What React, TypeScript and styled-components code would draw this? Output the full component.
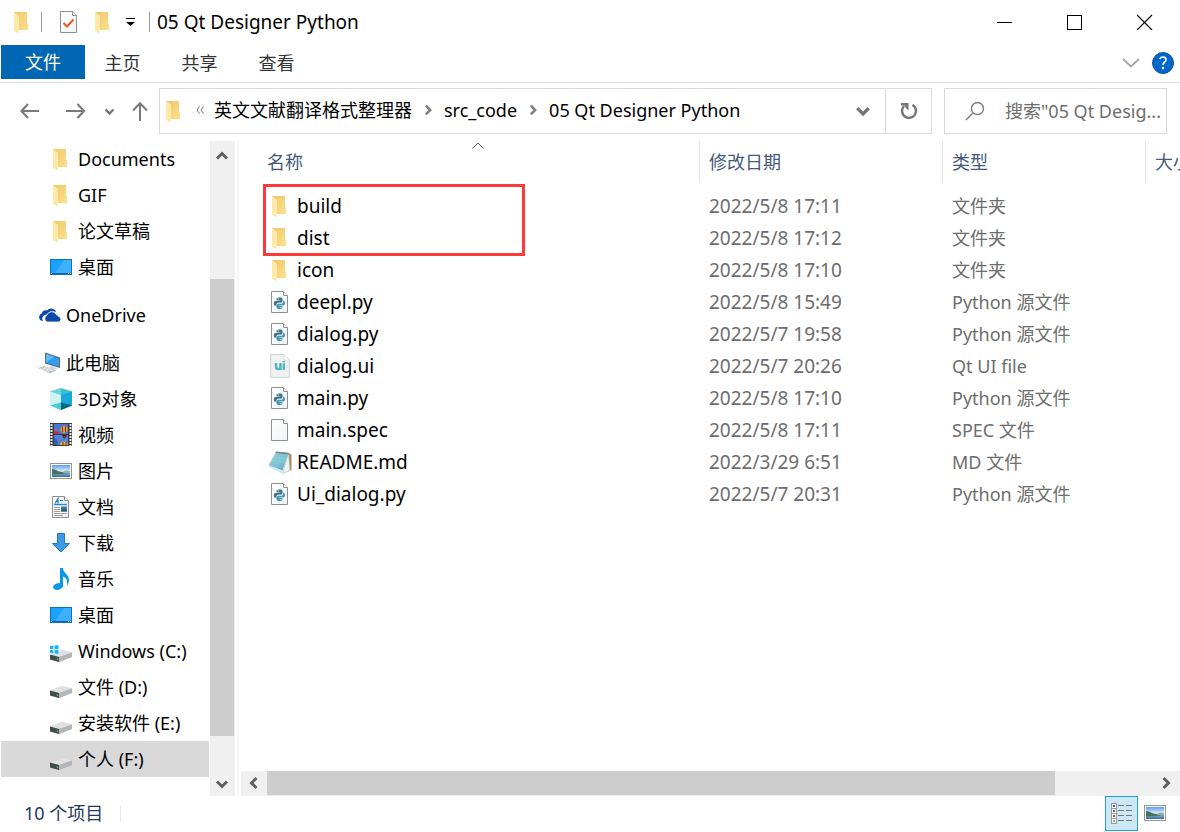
import React from "react";
import styled, { createGlobalStyle } from "styled-components";

const GlobalStyle = createGlobalStyle`
  * { box-sizing: border-box; }
  body {
    margin: 0;
    background: #fff;
    color: #000;
    font-family: "Noto Sans", "Noto Sans CJK SC", sans-serif;
    font-size: 18px;
    line-height: 24px;
  }
  button, input { font: inherit; color: inherit; }
  svg { display: block; flex: none; }
`;

/* ---------- shared ---------- */

const PlainButton = styled.button`
  display: flex;
  align-items: center;
  justify-content: center;
  flex: none;
  margin: 0;
  padding: 0;
  border: 0;
  background: none;
  white-space: nowrap;
`;

const Window = styled.div`
  display: flex;
  flex-direction: column;
  height: 100vh;
  min-height: 560px;
  overflow: hidden;
`;

/* ---------- title bar ---------- */

const TitleBar = styled.header`
  display: flex;
  align-items: center;
  flex: none;
  height: 45px;
  padding: 0 0 2px 14px;
`;

const QuickAccess = styled.div`
  display: flex;
  align-items: center;
  gap: 11px;
`;

const Divider = styled.span<{ $color?: string; $height?: number }>`
  flex: none;
  width: 1px;
  height: ${(p) => p.$height ?? 20}px;
  background: ${(p) => p.$color ?? "#999"};
`;

const QuickButton = styled(PlainButton)<{ $width?: number }>`
  width: ${(p) => p.$width ?? 16}px;
  height: 24px;
`;

const Title = styled.h1`
  flex: 1;
  min-width: 0;
  margin: 0;
  padding-left: 7px;
  overflow: hidden;
  font-size: 19px;
  font-weight: 400;
  text-overflow: ellipsis;
  white-space: nowrap;
`;

const CaptionButton = styled(PlainButton)`
  width: 70px;
  height: 43px;
`;

/* ---------- ribbon ---------- */

const Ribbon = styled.nav`
  display: flex;
  flex: none;
  height: 38px;
  padding: 0 6px 3px 1px;
  border-bottom: 1px solid #dadbdc;
`;

const RibbonTab = styled(PlainButton)<{ $primary?: boolean }>`
  width: ${(p) => (p.$primary ? 84 : 77)}px;
  height: 34px;
  padding: ${(p) => (p.$primary ? "0" : "2px 2px 0 0")};
  background: ${(p) => (p.$primary ? "#0167b5" : "transparent")};
  color: ${(p) => (p.$primary ? "#fff" : "#333")};
`;

const RibbonEnd = styled.div`
  display: flex;
  align-items: center;
  gap: 12px;
  margin-left: auto;
  padding-top: 2px;
`;

/* ---------- address row ---------- */

const AddressRow = styled.div`
  display: flex;
  align-items: center;
  flex: none;
  height: 58px;
  padding: 0 13px 2px 0;
`;

const NavButtons = styled.div`
  display: flex;
  flex: none;
  width: 159px;
  padding-left: 7px;
`;

const NavButton = styled(PlainButton)<{ $width: number }>`
  width: ${(p) => p.$width}px;
  height: 40px;
`;

const AddressBox = styled.div`
  display: flex;
  align-items: center;
  flex: 1;
  min-width: 0;
  height: 46px;
  padding-left: 6px;
  border: 1px solid #d9d9d9;
`;

const Crumbs = styled.div`
  display: flex;
  align-items: center;
  flex: 1;
  min-width: 0;
  gap: 10px;
  padding: 0 0 2px 14px;
  overflow: hidden;
`;

const RefreshButton = styled(PlainButton)`
  width: 46px;
  height: 44px;
  border-left: 1px solid #d9d9d9;
`;

const DropButton = styled(PlainButton)`
  width: 44px;
  height: 44px;
`;

const SearchBox = styled.label`
  display: flex;
  align-items: center;
  flex: none;
  width: 223px;
  height: 46px;
  margin-left: 12px;
  padding-left: 20px;
  gap: 20px;
  border: 1px solid #d9d9d9;
`;

const SearchInput = styled.input`
  flex: 1;
  min-width: 0;
  padding: 0;
  border: 0;
  outline: 0;
  background: none;
  &::placeholder { color: #6d6d6d; opacity: 1; }
`;

/* ---------- body ---------- */

const Body = styled.main`
  display: flex;
  flex: 1;
  min-height: 0;
`;

const Tree = styled.nav`
  flex: none;
  width: 210px;
  padding: 0 1px;
  overflow: hidden;
`;

const TreeGroup = styled.div`
  & + & { margin-top: 12px; }
`;

const TreeItem = styled.button<{ $root?: boolean; $selected?: boolean }>`
  display: flex;
  align-items: center;
  gap: 5px;
  width: 100%;
  height: 36px;
  margin: 0;
  padding: 0 0 0 ${(p) => (p.$root ? 36 : 48)}px;
  border: 0;
  background: ${(p) => (p.$selected ? "#d9d9d9" : "transparent")};
  text-align: left;
  white-space: nowrap;
`;

const IconSlot = styled.span`
  display: flex;
  align-items: center;
  justify-content: center;
  flex: none;
  width: 24px;
  height: 24px;
`;

const VerticalBar = styled.div`
  display: flex;
  flex-direction: column;
  flex: none;
  width: 25px;
  padding-right: 1px;
  background: #f0f0f0;
`;

const HorizontalBar = styled.div`
  display: flex;
  flex: none;
  height: 25px;
  margin-left: 2px;
  padding-bottom: 1px;
  background: #f0f0f0;
`;

const ScrollArrow = styled(PlainButton)<{ $length?: number }>`
  flex: 0 0 ${(p) => p.$length ?? 25}px;
`;

const ScrollSpace = styled.div<{ $grow: number }>`
  flex: ${(p) => p.$grow} 1 0;
`;

const ScrollThumb = styled(ScrollSpace)`
  background: #cdcdcd;
`;

const Content = styled.section`
  display: flex;
  flex-direction: column;
  flex: 1;
  min-width: 0;
  margin-left: 2px;
  border-left: 2px solid #f7f7f7;
`;

const ListArea = styled.div`
  position: relative;
  flex: 1;
  min-height: 0;
  overflow: hidden;
`;

const FileTable = styled.table`
  width: 1030px;
  border-collapse: separate;
  border-spacing: 0;
  table-layout: fixed;
`;

const HeadCell = styled.th<{ $width: number; $first?: boolean }>`
  width: ${(p) => p.$width}px;
  height: 41px;
  padding: 0 0 0 ${(p) => (p.$first ? 28 : 9)}px;
  border-right: 1px solid #e5e5e5;
  color: #44597b;
  font-weight: 400;
  text-align: left;
  white-space: nowrap;
`;

const SortMark = styled.span`
  position: absolute;
  top: 1px;
  left: 233px;
`;

const SpacerRow = styled.tr`
  height: 8px;
`;

const Cell = styled.td`
  height: 32px;
  padding: 0 0 0 9px;
  color: #6d6d6d;
  white-space: nowrap;
`;

const DateCell = styled(Cell)`
  font-size: 19px;
`;

const NameCell = styled(Cell)`
  padding-left: 29px;
  color: #000;
  font-size: 19px;
`;

const FileName = styled.div`
  display: flex;
  align-items: center;
  gap: 5px;
`;

const Highlight = styled.div`
  position: absolute;
  top: 43px;
  left: 24px;
  width: 262px;
  height: 72px;
  border: 3px solid #ff3838;
  pointer-events: none;
`;

/* ---------- status bar ---------- */

const StatusBar = styled.footer`
  display: flex;
  align-items: center;
  flex: none;
  gap: 17px;
  height: 36px;
  padding: 0 9px 2px 24px;
  color: #1e395b;
`;

const ViewButtons = styled.div`
  display: flex;
  align-items: center;
  margin-left: auto;
`;

const ViewButton = styled(PlainButton)<{ $active?: boolean }>`
  width: 33px;
  height: 35px;
  border: 1px solid ${(p) => (p.$active ? "#26a0da" : "transparent")};
  background: ${(p) => (p.$active ? "#cce8f6" : "transparent")};
`;

/* ---------- drawings ---------- */

const FolderIcon = () => (
  <svg width="16" height="22" viewBox="1 -1 16 22">
    <defs>
      <linearGradient id="folderBack" x1="0" x2="1" y1="0" y2="1">
        <stop offset="0" stopColor="#eec66b" />
        <stop offset="1" stopColor="#fde08c" />
      </linearGradient>
    </defs>
    <path d="M1 0H14V11L15 12V18H1Z" fill="url(#folderBack)" />
    <path d="M1 0L5 3L6 4V17L5 21L1 19Z" fill="#ffe9a6" />
    <path d="M5 18V21L4 20.500Z" fill="#f5d67d" />
  </svg>
);

const PageShape = () => (
  <>
    <defs>
      <linearGradient id="pageFill" x1="0" x2="1" y1="0" y2="1">
        <stop offset="0" stopColor="#ffffff" />
        <stop offset="1" stopColor="#f1f3f5" />
      </linearGradient>
    </defs>
    <path d="M.5.5H12.500L16.500 4.500V21.500H.5Z" fill="url(#pageFill)" stroke="#8e8e8e" />
    <path d="M12.500.5V4.500H16.500" fill="#fff" stroke="#8e8e8e" />
  </>
);

const CheckPageIcon = () => (
  <svg width="17" height="22" viewBox="0 0 17 22">
    <PageShape />
    <path d="M3.500 12L7 15.500L13.500 8.500" fill="none" stroke="#e8591c" strokeWidth="2" />
  </svg>
);

const PythonFileIcon = () => (
  <svg width="18" height="22" viewBox="0 0 18 22">
    <PageShape />
    <path
      d="M8.500 6.500C6.400 6.500 5.500 7 5.500 8.200V9.500H8.800V10H4.600C3.300 10 2.800 11 2.800 12.500C2.800 14 3.400 14.800 4.500 14.800H5.500V13.500C5.500 12.300 6.300 11.700 7.500 11.700H9.800C10.800 11.700 11.500 11 11.500 10V8.200C11.500 7 10.500 6.500 8.500 6.500Z"
      fill="#3f7896"
    />
    <path
      d="M8.500 18C10.600 18 11.500 17.500 11.500 16.400V15H8.300V14.500H12.300C13.500 14.500 14.100 13.500 14.100 12.100C14.100 10.600 13.500 9.800 12.500 9.800H12.100V11C12.100 12.200 11.300 12.800 10.100 12.800H7.500C6.300 12.800 5.500 13.500 5.500 14.500V16.400C5.500 17.500 6.500 18 8.500 18Z"
      fill="#5599b8"
    />
    <path d="M6.700 7.500h1v1h-1zM9.500 16h1v1h-1z" fill="#fff" />
  </svg>
);

const BlankFileIcon = () => (
  <svg width="18" height="22" viewBox="0 0 18 22">
    <PageShape />
  </svg>
);

const UiFileIcon = () => (
  <svg width="20" height="24" viewBox="0 0 20 24">
    <path d="M.5.5H14L19.500 6V23.500H.5Z" fill="#f1f1f1" stroke="#d2d2d2" />
    <path d="M14 .5V6H19.500Z" fill="#fff" stroke="#dedede" />
    <path d="M6 9V12.500Q6 15 8 15Q10.500 15 10.500 12.500V9V16" fill="none" stroke="#4cb6c2" strokeWidth="2.400" />
    <path d="M13.800 9.500V16M13.800 7V8.600" fill="none" stroke="#4cb6c2" strokeWidth="2.400" />
  </svg>
);

const NotepadIcon = () => (
  <svg width="24" height="24" viewBox="0 0 24 24">
    <defs>
      <linearGradient id="padFill" x1="0" x2="1" y1="0" y2="1">
        <stop offset="0" stopColor="#8ecbd6" />
        <stop offset=".6" stopColor="#7fc4d2" />
        <stop offset="1" stopColor="#3f9db4" />
      </linearGradient>
    </defs>
    <path d="M21 3L23.500 5V20L20 21.500Z" fill="#a58d55" />
    <path d="M20.500 3L22 20.500L14.500 23.500Z" fill="#eef3f5" stroke="#a9b4b8" strokeWidth=".6" />
    <path d="M8 2L20.500 3L14.500 20.500L.5 15.500Z" fill="url(#padFill)" />
    <path d="M.5 15.500L14.500 20.500V23.500L1 17Z" fill="#d7e6ea" />
    <path d="M8 1.500L21 2.800L20.500 4.500L7.500 3Z" fill="#76858a" />
    <path d="M6 7L18 9M5 10L17 12.500" stroke="#9ad3dd" strokeWidth=".5" />
  </svg>
);

const DesktopIcon = () => (
  <svg width="22" height="16" viewBox="0 0 22 16">
    <rect x=".5" y=".5" width="21" height="15" fill="#1ba1fb" stroke="#0e72b8" />
    <path d="M14 1H21V14H5Z" fill="#3cb0fd" />
    <path d="M1 14.500H21" stroke="#0b65a5" />
    <path d="M1 14.500H2M18 14.500H19M20 14.500H21" stroke="#fff" />
  </svg>
);

const OneDriveIcon = () => (
  <svg width="24" height="16" viewBox="-1 0 24 16">
    <path
      d="M5 14H4.500A3.800 3.800 0 0 1 3.800 6.600A4.500 4.500 0 0 1 9 3.500A5.500 5.500 0 0 1 17.800 3.800L17.500 5A6 6 0 0 0 9.500 7.500A4.300 4.300 0 0 0 5 14Z"
      fill="#0a4aad"
    />
    <path
      d="M9 15A3.500 3.500 0 0 1 8.800 8.500A5 5 0 0 1 18.200 7.500A3.500 3.500 0 0 1 20.500 9.500A2.800 2.800 0 0 1 20.800 15Z"
      fill="#0a4aad"
      stroke="#fff"
      strokeWidth=".8"
    />
  </svg>
);

const ComputerIcon = () => (
  <svg width="24" height="22" viewBox="0 0 24 22">
    <path d="M8 .5L23 5.500V16L8 11.500Z" fill="#516876" />
    <path d="M9 2L22 6.400V14.500L9 10.800Z" fill="#2f9ff2" />
    <path d="M9 2L17 4.700L9 10.500Z" fill="#62bcfa" />
    <path d="M14 13.500L18 14.500L21 17L16 18L12 16Z" fill="#d3dadd" />
    <path d="M1 16L7.500 14L19 18.500L13 21.500Z" fill="#b5bdc6" />
    <path d="M3 16.300L12.500 19.800M5 15.600L15 19.200M7 15L17 18.700M4 18L10 15.500M8 19.500L14 17" stroke="#eef1f3" strokeWidth=".7" />
  </svg>
);

const CubeIcon = () => (
  <svg width="22" height="22" viewBox="0 0 22 22">
    <path d="M11 0L22 3.500L11 7L0 3.500Z" fill="#3bbfd0" />
    <path d="M0 3.500L11 7V22L0 17.500Z" fill="#b9ecef" />
    <path d="M0 3.500L11 7V14.500L0 17.500Z" fill="#cff3f4" />
    <path d="M11 7L22 3.500V17.500L11 22Z" fill="#0d9fca" />
    <path d="M11 7L22 3.500L22 17.500L11 14.500Z" fill="#18a9da" />
    <path d="M0 17.500L11 14.500V22Z" fill="#4ccbd8" />
    <path d="M11 14.500L22 17.500L11 22Z" fill="#04677f" />
    <path d="M11 0V7L0 3.500Z" fill="#69d3dd" />
  </svg>
);

const VideoIcon = () => (
  <svg width="22" height="24" viewBox="0 0 22 24">
    <rect width="22" height="23" fill="#3c3c3c" />
    <path d="M1.500 1V23M20.500 1V23" stroke="#ececec" strokeWidth="2" strokeDasharray="2 1" />
    <rect x="4" y="1" width="14" height="10" fill="#4777d5" />
    <rect x="4" y="12" width="14" height="10" fill="#4f83e0" />
    <path d="M4 8L8 9L11 11H4Z" fill="#b92f4f" />
    <path d="M4 15L9 18L7 22H4Z" fill="#325cba" />
    <circle cx="14" cy="6.500" r="3.500" fill="#e9b61b" />
    <path d="M12.500 3.500V9.500M15.500 3.500V9.500" stroke="#9f2530" strokeWidth="1.200" />
    <path d="M12.500 12.500H16.500L15 15H14Z" stroke="#492414" fill="#b93827" />
    <circle cx="6" cy="7" r="1.300" fill="#e34b55" />
    <path d="M10 22Q10 18.500 14 18.500Q18 18.500 18 22Z" fill="#e2b11f" />
    <path d="M13 19V22M16 19V22" stroke="#8c2730" />
    <path d="M7 17L9 19" stroke="#e05a76" />
  </svg>
);

const PictureIcon = () => (
  <svg width="22" height="16" viewBox="0 0 22 16">
    <defs>
      <linearGradient id="skyFill" x1="0" x2="0" y1="0" y2="1">
        <stop offset="0" stopColor="#5b9cef" />
        <stop offset=".5" stopColor="#dcecf8" />
        <stop offset=".7" stopColor="#7eaad0" />
        <stop offset="1" stopColor="#37699f" />
      </linearGradient>
    </defs>
    <rect x=".5" y=".5" width="21" height="15" fill="#fff" stroke="#969696" />
    <rect x="2" y="2" width="18" height="12" fill="url(#skyFill)" />
    <path d="M2 6L5 6.500L9 8.500L14 9.500L19 10L12 11L2 11.500Z" fill="#45735c" />
    <path d="M13 9L16 7.500L20 8V10L14 10Z" fill="#8fb2a9" />
  </svg>
);

const DocumentIcon = () => (
  <svg width="18" height="22" viewBox="0 0 18 22">
    <PageShape />
    <path d="M3 7.500L6 2.500V7.500M4 5.700H6M8 4.500H11" fill="none" stroke="#2484c8" strokeWidth="1.200" />
    <path d="M2 8.500H15" stroke="#1f8ad6" strokeWidth="1.500" />
    <path d="M2 11.500H8M2 13.500H8M2 15.500H8M2 17.500H15M2 19.500H11" stroke="#9d9d9d" />
    <rect x="9" y="10.500" width="6" height="5" fill="#3a78b4" />
    <path d="M9 14L12 12.500L15 14V15.500H9Z" fill="#335f52" />
  </svg>
);

const DownloadIcon = () => (
  <svg width="20" height="20" viewBox="0 0 20 20">
    <path d="M6.500 .5H13.500V10.500H18.500L10 19L1.500 10.500H6.500Z" fill="#3d99ec" stroke="#2477bd" />
  </svg>
);

const MusicIcon = () => (
  <svg width="18" height="22" viewBox="0 0 18 22">
    <ellipse cx="6" cy="18.500" rx="5" ry="3.300" fill="#0a96ea" transform="rotate(-12 6 18.500)" />
    <path d="M8 0H11C11 5 17 6.500 17 12C17 14.500 16 16.500 15 17.500C15.800 13 15 10 11 8.500V19H8Z" fill="#0a96ea" />
  </svg>
);

const DriveIcon = ({ system }: { system?: boolean }) => (
  <svg width="22" height="22" viewBox="0 0 22 22">
    <path d="M0 14.500L12 10L22 12.500V17L9 22L0 19.500Z" fill="#c7c9cc" />
    <path d="M0 14.500L12 10L22 12.500L9 17Z" fill="#e0e1e4" />
    <path d="M0 14.500L9 17V22L0 19.500Z" fill="#454b48" />
    <path d="M9 17L22 12.500V17L9 22Z" fill="#b4b5b8" />
    <path d="M7.500 18.500V20" stroke="#4fc76d" strokeWidth="1.500" />
    {system && (
      <>
        <path d="M0 4H9V13L0 14.500Z" fill="#fff" />
        <path d="M0 6L3.500 5.500V9H0ZM4.500 5.400L8.500 5V9H4.500ZM0 10H3.500V13.500L0 13ZM4.500 10H8.500V14L4.500 13.600Z" fill="#10bdf2" />
      </>
    )}
  </svg>
);

const Chevron = ({ d, size = 14, color = "#606060", weight = 3 }: { d: string; size?: number; color?: string; weight?: number }) => (
  <svg width={size} height={size} viewBox="0 0 14 14" fill="none" stroke={color} strokeWidth={weight}>
    <path d={d} />
  </svg>
);

const UP = "M2 9.500L7 4.500L12 9.500";
const DOWN = "M2 4.500L7 9.500L12 4.500";
const LEFT = "M9.500 2L4.500 7L9.500 12";
const RIGHT = "M4.500 2L9.500 7L4.500 12";

const DetailsIcon = () => (
  <svg width="22" height="22" viewBox="0 0 22 22">
    {["#3775a9", "#526e96", "#c83a2d", "#78aa60"].map((color, i) => (
      <g key={color} transform={`translate(0 ${i * 5})`}>
        <rect x=".5" y="1.500" width="5" height="5" fill="#fff" stroke="#999" />
        <rect x="2" y="3" width="2" height="2" fill={color} />
        <path d="M7 3.500H13M15 3.500H21" stroke="#767676" />
      </g>
    ))}
  </svg>
);

/* ---------- data ---------- */

type Entry = { icon: React.ReactNode; label: string; root?: boolean; selected?: boolean };

const treeGroups: Entry[][] = [
  [
    { icon: <FolderIcon />, label: "Documents" },
    { icon: <FolderIcon />, label: "GIF" },
    { icon: <FolderIcon />, label: "论文草稿" },
    { icon: <DesktopIcon />, label: "桌面" },
  ],
  [{ icon: <OneDriveIcon />, label: "OneDrive", root: true }],
  [
    { icon: <ComputerIcon />, label: "此电脑", root: true },
    { icon: <CubeIcon />, label: "3D对象" },
    { icon: <VideoIcon />, label: "视频" },
    { icon: <PictureIcon />, label: "图片" },
    { icon: <DocumentIcon />, label: "文档" },
    { icon: <DownloadIcon />, label: "下载" },
    { icon: <MusicIcon />, label: "音乐" },
    { icon: <DesktopIcon />, label: "桌面" },
    { icon: <DriveIcon system />, label: "Windows (C:)" },
    { icon: <DriveIcon />, label: "文件 (D:)" },
    { icon: <DriveIcon />, label: "安装软件 (E:)" },
    { icon: <DriveIcon />, label: "个人 (F:)", selected: true },
  ],
];

const files = [
  { icon: <FolderIcon />, name: "build", date: "2022/5/8 17:11", type: "文件夹" },
  { icon: <FolderIcon />, name: "dist", date: "2022/5/8 17:12", type: "文件夹" },
  { icon: <FolderIcon />, name: "icon", date: "2022/5/8 17:10", type: "文件夹" },
  { icon: <PythonFileIcon />, name: "deepl.py", date: "2022/5/8 15:49", type: "Python 源文件" },
  { icon: <PythonFileIcon />, name: "dialog.py", date: "2022/5/7 19:58", type: "Python 源文件" },
  { icon: <UiFileIcon />, name: "dialog.ui", date: "2022/5/7 20:26", type: "Qt UI file" },
  { icon: <PythonFileIcon />, name: "main.py", date: "2022/5/8 17:10", type: "Python 源文件" },
  { icon: <BlankFileIcon />, name: "main.spec", date: "2022/5/8 17:11", type: "SPEC 文件" },
  { icon: <NotepadIcon />, name: "README.md", date: "2022/3/29 6:51", type: "MD 文件" },
  { icon: <PythonFileIcon />, name: "Ui_dialog.py", date: "2022/5/7 20:31", type: "Python 源文件" },
];

const crumbs = ["英文文献翻译格式整理器", "src_code", "05 Qt Designer Python"];

/* ---------- app ---------- */

export default function App() {
  return (
    <Window>
      <GlobalStyle />
      <TitleBar>
        <QuickAccess>
          <FolderIcon />
          <Divider />
          <QuickButton $width={31} aria-label="属性"><CheckPageIcon /></QuickButton>
          <QuickButton aria-label="新建文件夹"><FolderIcon /></QuickButton>
          <QuickButton aria-label="自定义快速访问工具栏">
            <svg width="10" height="10" viewBox="0 0 10 10">
              <path d="M1 1.500H10" stroke="#000" />
              <path d="M1 5H10L5.500 9Z" fill="#000" />
            </svg>
          </QuickButton>
          <Divider />
        </QuickAccess>
        <Title>05 Qt Designer Python</Title>
        <CaptionButton aria-label="最小化">
          <svg width="16" height="16" viewBox="0 0 16 16"><path d="M0 8.500H15" stroke="#000" /></svg>
        </CaptionButton>
        <CaptionButton aria-label="最大化">
          <svg width="16" height="16" viewBox="0 0 16 16"><rect x=".5" y="1.500" width="14" height="14" fill="none" stroke="#000" /></svg>
        </CaptionButton>
        <CaptionButton aria-label="关闭">
          <svg width="16" height="16" viewBox="0 0 16 16"><path d="M0 1L15 16M15 1L0 16" stroke="#000" strokeWidth="1.200" /></svg>
        </CaptionButton>
      </TitleBar>

      <Ribbon>
        <RibbonTab $primary>文件</RibbonTab>
        <RibbonTab>主页</RibbonTab>
        <RibbonTab>共享</RibbonTab>
        <RibbonTab>查看</RibbonTab>
        <RibbonEnd>
          <PlainButton aria-label="展开功能区">
            <svg width="18" height="12" viewBox="0 0 18 12"><path d="M1 2L9 9.500L17 2" fill="none" stroke="#a6a6a6" strokeWidth="1.800" /></svg>
          </PlainButton>
          <PlainButton aria-label="帮助">
            <svg width="22" height="22" viewBox="0 0 22 22">
              <circle cx="11" cy="11" r="10.500" fill="#0068cc" stroke="#0b529c" />
              <path d="M8 7.200Q8.300 5 11 5Q14 5 14 7.600Q14 9.200 12.500 10.200Q11 11.200 11 13" fill="none" stroke="#fff" strokeWidth="1.700" />
              <circle cx="11" cy="16" r="1.200" fill="#fff" />
            </svg>
          </PlainButton>
        </RibbonEnd>
      </Ribbon>

      <AddressRow>
        <NavButtons>
          <NavButton $width={46} aria-label="后退">
            <svg width="20" height="16" viewBox="0 0 20 16"><path d="M19 8H1.500M8 1L1.500 8L8 15" fill="none" stroke="#7a7a7a" strokeWidth="2.200" /></svg>
          </NavButton>
          <NavButton $width={46} aria-label="前进">
            <svg width="20" height="16" viewBox="0 0 20 16"><path d="M0 8H18M11.500 1L18 8L11.500 15" fill="none" stroke="#7a7a7a" strokeWidth="2.200" /></svg>
          </NavButton>
          <NavButton $width={20} aria-label="最近位置"><Chevron d={DOWN} size={11} color="#757575" weight={3} /></NavButton>
          <NavButton $width={42} aria-label="上移">
            <svg width="16" height="20" viewBox="0 0 16 20"><path d="M8 20V2M1 9.500L8 2.300L15 9.500" fill="none" stroke="#7a7a7a" strokeWidth="2" /></svg>
          </NavButton>
        </NavButtons>
        <AddressBox>
          <FolderIcon />
          <Crumbs>
            <svg width="8" height="8" viewBox="0 0 8 8"><path d="M3.500 .5L1 4L3.500 7.500M7.500 .5L5 4L7.500 7.500" fill="none" stroke="#707070" /></svg>
            {crumbs.map((crumb, i) => (
              <React.Fragment key={crumb}>
                {i > 0 && <Chevron d={RIGHT} size={12} color="#808080" />}
                <PlainButton>{crumb}</PlainButton>
              </React.Fragment>
            ))}
          </Crumbs>
          <DropButton aria-label="以前的位置"><Chevron d={DOWN} size={16} color="#757575" /></DropButton>
          <RefreshButton aria-label="刷新">
            <svg width="18" height="18" viewBox="0 0 18 18">
              <path d="M12.500 2.800A7 7 0 1 1 4 4" fill="none" stroke="#777" strokeWidth="2.500" />
              <path d="M1 1H8.500V8.500L6 6L4.500 3.500H1Z" fill="#777" />
            </svg>
          </RefreshButton>
        </AddressBox>
        <SearchBox>
          <svg width="20" height="20" viewBox="0 0 20 20" fill="none" stroke="#7d7d7d" strokeWidth="1.400">
            <circle cx="12.500" cy="7.500" r="6" />
            <path d="M8 12L1 19" />
          </svg>
          <SearchInput type="text" aria-label="搜索" placeholder={'搜索"05 Qt Desig...'} />
        </SearchBox>
      </AddressRow>

      <Body>
        <Tree>
          {treeGroups.map((group, g) => (
            <TreeGroup key={g}>
              {group.map((item) => (
                <TreeItem key={item.label} $root={item.root} $selected={item.selected}>
                  <IconSlot>{item.icon}</IconSlot>
                  {item.label}
                </TreeItem>
              ))}
            </TreeGroup>
          ))}
        </Tree>
        <VerticalBar>
          <ScrollArrow $length={29} aria-label="向上滚动"><Chevron d={UP} /></ScrollArrow>
          <ScrollSpace $grow={109} />
          <ScrollThumb $grow={457} />
          <ScrollSpace $grow={35} />
          <ScrollArrow aria-label="向下滚动"><Chevron d={DOWN} /></ScrollArrow>
        </VerticalBar>
        <Content>
          <ListArea>
            <FileTable>
              <thead>
                <tr>
                  <HeadCell $width={461} $first>名称</HeadCell>
                  <HeadCell $width={243}>修改日期</HeadCell>
                  <HeadCell $width={203}>类型</HeadCell>
                  <HeadCell $width={123}>大小</HeadCell>
                </tr>
              </thead>
              <tbody>
                <SpacerRow />
                {files.map((file) => (
                  <tr key={file.name}>
                    <NameCell>
                      <FileName>
                        <IconSlot>{file.icon}</IconSlot>
                        {file.name}
                      </FileName>
                    </NameCell>
                    <DateCell>{file.date}</DateCell>
                    <Cell>{file.type}</Cell>
                    <Cell />
                  </tr>
                ))}
              </tbody>
            </FileTable>
            <SortMark>
              <svg width="12" height="8" viewBox="0 0 12 8"><path d="M.5 6.500L6 1L11.500 6.500" fill="none" stroke="#555" /></svg>
            </SortMark>
            <Highlight />
          </ListArea>
          <HorizontalBar>
            <ScrollArrow $length={26} aria-label="向左滚动"><Chevron d={LEFT} /></ScrollArrow>
            <ScrollThumb $grow={788} />
            <ScrollSpace $grow={96} />
            <ScrollArrow $length={29} aria-label="向右滚动"><Chevron d={RIGHT} /></ScrollArrow>
          </HorizontalBar>
        </Content>
      </Body>

      <StatusBar>
        <span>10 个项目</span>
        <Divider $color="#e8e8e8" $height={17} />
        <ViewButtons>
          <ViewButton $active aria-label="详细信息"><DetailsIcon /></ViewButton>
          <ViewButton aria-label="大图标"><PictureIcon /></ViewButton>
        </ViewButtons>
      </StatusBar>
    </Window>
  );
}
